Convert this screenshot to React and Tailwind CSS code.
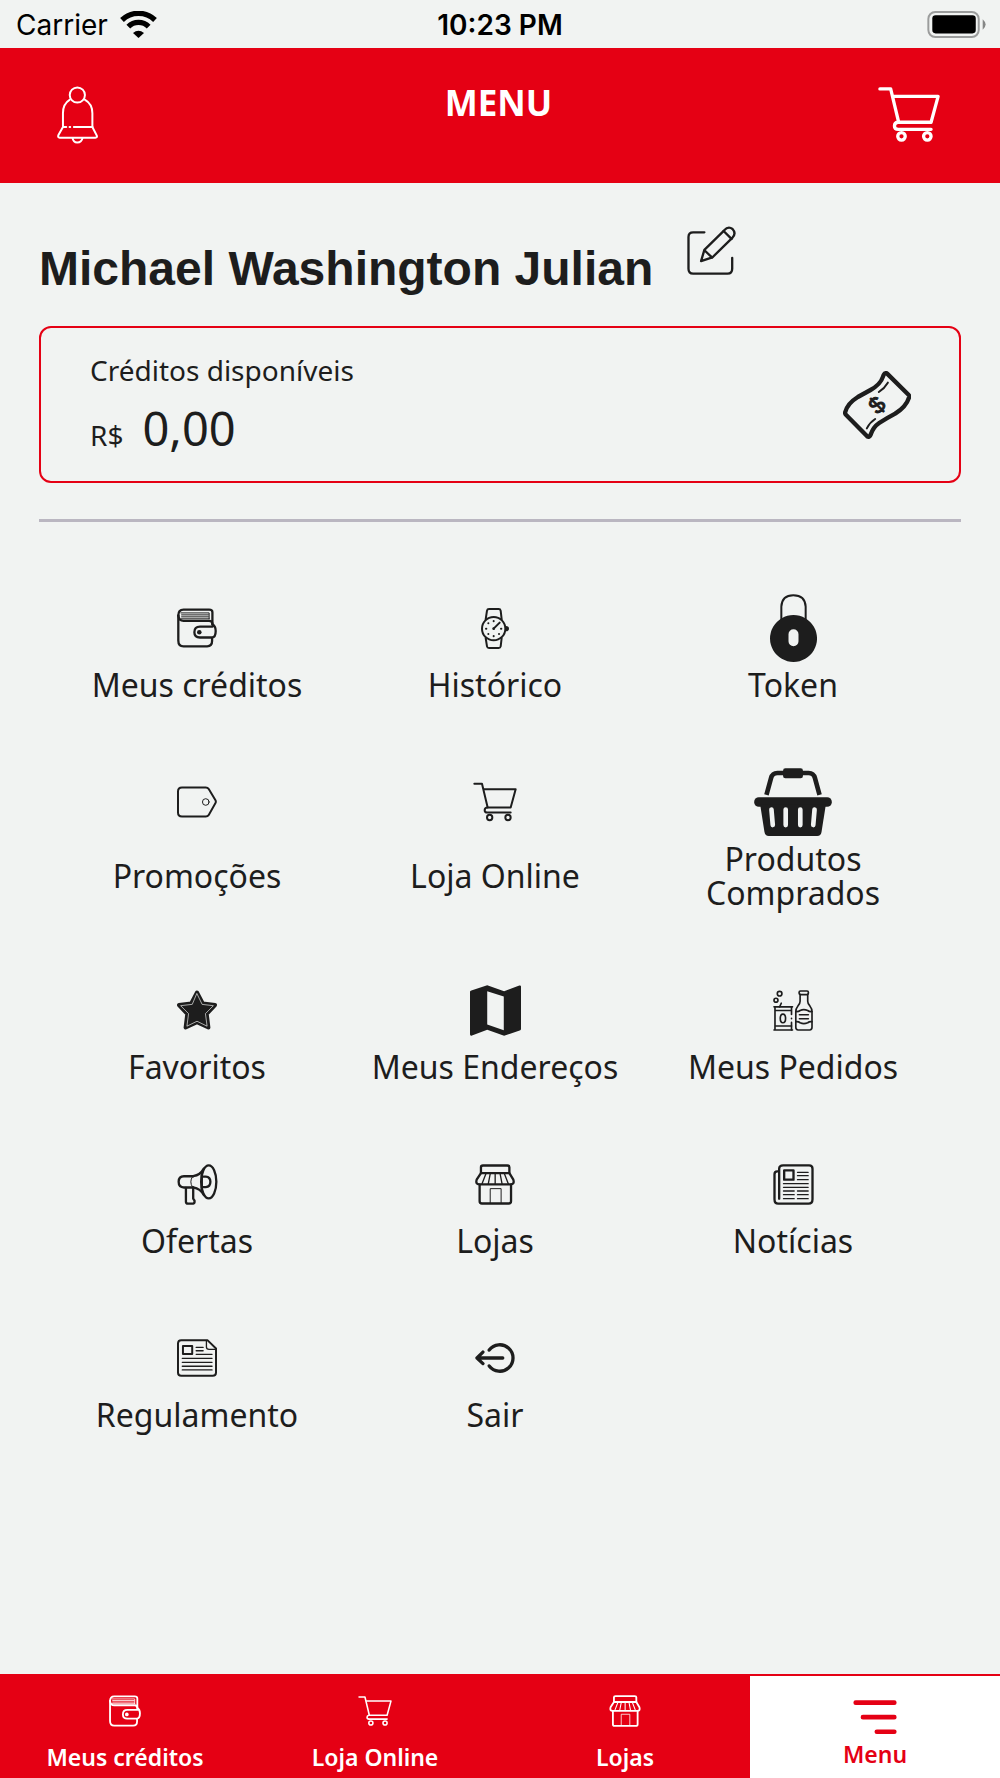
import clsx from 'clsx';

const line = {
  fill: 'none',
  stroke: 'currentColor',
  strokeLinecap: 'round',
  strokeLinejoin: 'round',
};

function WifiIcon({ className }) {
  return (
    <svg viewBox="0 0 109 81" className={className} fill="none" stroke="currentColor" aria-hidden="true">
      <path d="M5 27A71 71 0 0 1 104 27" strokeWidth="16" />
      <path d="M24 47A43 43 0 0 1 85 47" strokeWidth="16" />
      <path d="M38 66Q54 52 71 66L54.5 81Z" fill="currentColor" stroke="none" />
    </svg>
  );
}

function BatteryIcon({ className }) {
  return (
    <svg viewBox="0 0 177 82" className={className} aria-hidden="true">
      <rect x="3" y="3" width="153" height="76" rx="21" fill="none" stroke="#9b9c9c" strokeWidth="6" />
      <rect x="15" y="13" width="132" height="55" rx="10" fill="#000" />
      <path d="M168 25Q177 33 177 41Q177 49 168 57Z" fill="#858686" />
    </svg>
  );
}

function BellIcon({ className }) {
  return (
    <svg viewBox="0 0 124 175" className={className} {...line} strokeWidth="6" aria-hidden="true">
      <circle cx="61.5" cy="27" r="23" />
      <path d="M39 41Q18 54 18 82V123M84 41Q107 54 107 82V123" />
      <path d="M18 124H28M38 124H40M51 124H107" />
      <path d="M18 124L4 149Q2 156 8 156H116Q123 156 120 149L107 124" />
      <path d="M47 157Q49 171 61 171Q75 171 77 157" />
    </svg>
  );
}

function CartIcon({ className, weight = 6 }) {
  return (
    <svg viewBox="0 0 132 117" className={className} {...line} strokeWidth={weight} aria-hidden="true">
      <path d="M4 4H27L44 75" />
      <path d="M33 20H128L113 75H42Q35 76 35 83Q35 90 43 90H113" />
      <circle cx="50" cy="105" r="8" />
      <circle cx="105" cy="105" r="8" />
    </svg>
  );
}

function EditIcon({ className }) {
  return (
    <svg viewBox="0 0 147 148" className={className} {...line} strokeWidth="7" aria-hidden="true">
      <path d="M52 19H18Q4 19 4 33V129Q4 144 18 144H122Q136 144 136 129V96" />
      <path d="M42 106L52 72L112 13Q124 -1 137 9Q149 22 137 35L76 95Z" />
      <path d="M110 15L134 39M53 74L75 95" />
    </svg>
  );
}

function MoneyIcon({ className }) {
  return (
    <svg viewBox="0 0 203 204" className={className} {...line} strokeWidth="13" aria-hidden="true">
      <path d="M127 6Q122 8 119 18Q112 40 82 57L44 78Q12 98 6 124Q5 128 9 132L72 196Q78 200 82 192Q90 168 108 156Q130 142 156 128Q190 106 198 78Q199 74 196 71L132 8Q129 5 127 6Z" />
      <path d="M134 35Q124 52 107 63M96 144Q80 154 71 172" strokeWidth="6" />
      <text
        x="101"
        y="126"
        transform="rotate(-45 101 102)"
        textAnchor="middle"
        fontSize="70"
        fill="currentColor"
        strokeWidth="3"
        className="font-['Liberation_Sans']"
      >
        $
      </text>
    </svg>
  );
}

function WalletIcon({ className }) {
  return (
    <svg viewBox="0 0 122 120" className={className} {...line} strokeWidth="7" aria-hidden="true">
      <path d="M4 22Q4 4 20 4H98Q108 4 108 12V48" />
      <path d="M4 22V98Q4 116 20 116H92Q107 116 107 100V91" />
      <path d="M4 22Q6 38 20 38H98Q108 38 108 48" />
      <path d="M12 14H98V32M14 20H96M14 26H96M12 32H98" strokeWidth="3" />
      <path d="M108 56H70Q53 56 53 73Q53 89 70 89H107Q118 88 118 69Q118 54 108 49" />
      <circle cx="68" cy="73" r="7" fill="currentColor" stroke="none" />
    </svg>
  );
}

function WatchIcon({ className }) {
  return (
    <svg viewBox="0 0 84 123" className={className} {...line} strokeWidth="6" aria-hidden="true">
      <circle cx="38" cy="62" r="35" />
      <path d="M14 34L18 8Q19 3 24 3H53Q58 3 59 8L62 34" />
      <path d="M14 90L18 115Q19 120 24 120H53Q58 120 59 115L62 90" />
      <path d="M38 62L56 44" />
      <circle cx="38" cy="62" r="4" fill="currentColor" stroke="none" />
      <path d="M75 54Q84 55 84 62Q84 69 75 70Z" fill="currentColor" stroke="none" />
      <path d="M38 39V40M38 84V85M15 62H16M60 62H61M22 46H22.1M22 78H22.1M54 78H54.1" strokeWidth="6" />
    </svg>
  );
}

function PadlockIcon({ className }) {
  return (
    <svg viewBox="0 0 141 204" className={className} aria-hidden="true">
      <path d="M34 80V38Q36 4 70 4Q105 4 107 38V80" fill="none" stroke="currentColor" strokeWidth="6" />
      <path
        d="M70.5 63a70.5 70.5 0 1 0 .1 0ZM70.5 106a15 15 0 0 1 15 15v21a15 15 0 0 1-30 0v-21a15 15 0 0 1 15-15Z"
        fill="currentColor"
        fillRule="evenodd"
      />
    </svg>
  );
}

function TagIcon({ className }) {
  return (
    <svg viewBox="0 0 121 94" className={className} {...line} strokeWidth="6" aria-hidden="true">
      <path d="M15 3H87Q93 3 96 8L116 41Q119 46 116 51L96 86Q93 91 87 91H15Q3 91 3 79V15Q3 3 15 3Z" />
      <circle cx="87" cy="47" r="10" strokeWidth="3" />
    </svg>
  );
}

function BasketIcon({ className }) {
  return (
    <svg viewBox="0 0 234 205" className={className} aria-hidden="true">
      <path d="M37 81L51 30Q55 15 70 15H164Q179 15 183 30L197 81" fill="none" stroke="currentColor" strokeWidth="14" />
      <rect x="87" y="1" width="60" height="30" rx="7" fill="currentColor" />
      <rect x="0" y="88" width="234" height="29" rx="14" fill="currentColor" />
      <path d="M18 110L31 193Q33 205 44 205H190Q201 205 203 193L216 110Z" fill="currentColor" />
      <path
        d="M52 125L56 172M95 125V172M139 125V172M182 125L178 172"
        stroke="#f1f3f2"
        strokeWidth="14"
        strokeLinecap="round"
      />
    </svg>
  );
}

function StarIcon({ className }) {
  return (
    <svg viewBox="0 0 121 118" className={className} {...line} aria-hidden="true">
      <path
        d="M60.5 6L78 39L115 44L90 71L95 112L60.5 96L26 112L31 71L6 44L43 39Z"
        fill="currentColor"
        strokeWidth="12"
      />
      <path
        d="M60.5 10L76 42L110 46L86 70L91 108L60.5 93L30 108L35 70L11 46L45 42Z"
        stroke="#f1f3f2"
        strokeWidth="2"
      />
    </svg>
  );
}

function MapIcon({ className }) {
  return (
    <svg viewBox="0 0 154 153" className={className} aria-hidden="true">
      <path
        d="M0 20Q0 17 4 16L52 0L103 18L149 1Q154 0 154 4V132Q154 135 150 137L103 153L52 135L6 152Q0 154 0 148ZM52 18V119L102 136V34Z"
        fill="currentColor"
        fillRule="evenodd"
      />
    </svg>
  );
}

function DrinksIcon({ className }) {
  return (
    <svg viewBox="0 0 121 124" className={className} {...line} strokeWidth="5" aria-hidden="true">
      <circle cx="20" cy="11" r="7" />
      <circle cx="9" cy="31" r="6" />
      <path d="M25 40L20 51" />
      <path d="M3 51H59M3 121H59M6 51V121M6 62H54M6 109H56" />
      <path d="M56 51V74M56 86V87M56 98V121" />
      <ellipse cx="30" cy="86" rx="8" ry="13" />
      <rect x="79" y="3" width="28" height="11" rx="4" />
      <path d="M82 13V34Q82 42 75 49Q69 56 69 66V113Q69 121 76 121H111Q118 121 118 113V66Q118 56 112 49Q105 42 105 34V13" />
      <path d="M69 65Q77 66 82 62Q93 57 105 62Q110 66 118 65M69 96Q77 95 82 99Q93 104 105 99Q110 95 118 96M80 75H107M80 87H107" />
    </svg>
  );
}

function MegaphoneIcon({ className }) {
  return (
    <svg viewBox="0 0 122 124" className={className} {...line} strokeWidth="7" aria-hidden="true">
      <ellipse cx="95" cy="54" rx="23" ry="50" />
      <path d="M48 37H20Q4 37 4 54Q4 71 20 71H48" />
      <path d="M48 37Q70 33 80 14M48 71Q70 75 80 94" />
      <path d="M46 38Q35 54 46 70" strokeWidth="3" />
      <path d="M74 28V82M74 38H86Q100 39 100 54Q100 69 86 70H74" />
      <path d="M26 72V114Q26 120 32 120H48Q53 119 52 111L48 105V72" />
    </svg>
  );
}

function StoreIcon({ className }) {
  return (
    <svg viewBox="0 0 121 123" className={className} {...line} strokeWidth="7" aria-hidden="true">
      <path d="M18 27V9Q18 4 24 4H98Q104 4 104 9V27Z" />
      <path d="M18 27L5 47Q1 61 13 61H108Q120 61 116 47L104 27" />
      <path d="M33 29L21 60M46 29L40 60M61 29V60M76 29L82 60M89 29L101 60" strokeWidth="4" />
      <path d="M14 62V112Q14 119 21 119H102Q109 119 109 112V62" />
      <path d="M46 117V74H79V117" strokeWidth="3" />
    </svg>
  );
}

function NewspaperIcon({ className }) {
  return (
    <svg viewBox="0 0 122 123" className={className} {...line} strokeWidth="7" aria-hidden="true">
      <path d="M18 104V14Q18 4 30 4H108Q118 4 118 14V106Q118 119 106 119H15Q4 119 4 106V31Q4 22 12 22H17" />
      <path d="M33 19H61V47H33Z" />
      <path
        d="M73 25H105M73 35H105M73 47H105M31 59H105M31 70H105M31 81H63M73 81H105M31 92H63M73 92H105M31 104H63M73 104H105"
        strokeWidth="4"
      />
    </svg>
  );
}

function DocumentIcon({ className }) {
  return (
    <svg viewBox="0 0 121 114" className={className} {...line} strokeWidth="6" aria-hidden="true">
      <path d="M13 3H92L118 28V101Q118 111 108 111H13Q3 111 3 101V13Q3 3 13 3Z" />
      <path d="M18 21H46V45H18Z" />
      <path d="M89 5V24Q89 31 97 31H116" strokeWidth="4" />
      <path d="M58 25H79M58 35H79M58 46H106M16 58H106M16 70H106M16 82H106M16 93H106" strokeWidth="4" />
    </svg>
  );
}

function ExitIcon({ className }) {
  return (
    <svg viewBox="0 0 121 90" className={className} {...line} strokeWidth="10" aria-hidden="true">
      <path d="M43 21A40 40 0 1 1 43 69" />
      <path d="M6 45H84M24 27L6 45L24 62" />
    </svg>
  );
}

function MenuIcon({ className }) {
  return (
    <svg viewBox="0 0 131 103" className={className} {...line} strokeWidth="14" aria-hidden="true">
      <path d="M7 8H124M29 52H124M71 96H124" />
    </svg>
  );
}

const MENU_ITEMS = [
  { label: 'Meus créditos', Icon: WalletIcon, size: 'w-10 h-10' },
  { label: 'Histórico', Icon: WatchIcon, size: 'w-7 h-[41px]' },
  { label: 'Token', Icon: PadlockIcon, size: 'w-[47px] h-[68px]' },
  { label: 'Promoções', Icon: TagIcon, size: 'w-10 h-8' },
  { label: 'Loja Online', Icon: CartIcon, size: 'w-11 h-10' },
  { label: 'Produtos Comprados', Icon: BasketIcon, size: 'w-[78px] h-[68px]' },
  { label: 'Favoritos', Icon: StarIcon, size: 'w-10 h-10' },
  { label: 'Meus Endereços', Icon: MapIcon, size: 'w-[51px] h-[51px]' },
  { label: 'Meus Pedidos', Icon: DrinksIcon, size: 'w-10 h-[41px]' },
  { label: 'Ofertas', Icon: MegaphoneIcon, size: 'w-[41px] h-[41px]' },
  { label: 'Lojas', Icon: StoreIcon, size: 'w-10 h-[41px]' },
  { label: 'Notícias', Icon: NewspaperIcon, size: 'w-[41px] h-[41px]' },
  { label: 'Regulamento', Icon: DocumentIcon, size: 'w-10 h-[38px]' },
  { label: 'Sair', Icon: ExitIcon, size: 'w-10 h-[30px]' },
];

const TABS = [
  { label: 'Meus créditos', Icon: WalletIcon, size: 'w-8 h-8' },
  { label: 'Loja Online', Icon: CartIcon, size: 'w-[34px] h-8' },
  { label: 'Lojas', Icon: StoreIcon, size: 'w-8 h-8' },
  { label: 'Menu', Icon: MenuIcon, size: 'w-11 h-[34px]', active: true },
];

function StatusBar() {
  return (
    <div className="grid grid-cols-3 items-center h-12 px-[14px] text-black text-[28px] leading-8 font-['Inter',sans-serif]">
      <div className="flex items-center gap-3 pl-[2px]">
        <span className="pt-[2px]">Carrier</span>
        <WifiIcon className="w-[37px] h-[27px]" />
      </div>
      <span className="pt-[2px] text-center font-semibold">10:23 PM</span>
      <BatteryIcon className="w-[59px] h-[27px] justify-self-end" />
    </div>
  );
}

function Header() {
  return (
    <header className="grid grid-cols-3 items-center h-[135px] pl-[57px] pr-[60px] pb-[2px] bg-[#e50014] text-white">
      <button type="button" aria-label="Notificações" className="justify-self-start">
        <BellIcon className="w-[41px] h-[58px]" />
      </button>
      <h1 className="self-start pt-[35px] text-center text-[35px] leading-10 font-bold">MENU</h1>
      <button type="button" aria-label="Carrinho" className="justify-self-end">
        <CartIcon className="w-[62px] h-[55px]" weight={7} />
      </button>
    </header>
  );
}

function CreditCard() {
  return (
    <section className="mt-[29px] flex items-center justify-between px-12 pt-6 pb-[23px] border-2 border-[#e50014] rounded-xl">
      <div className="pl-[1px]">
        <p className="text-[28px] leading-9">Créditos disponíveis</p>
        <p className="mt-[10px] flex items-baseline gap-[19px]">
          <span className="text-[28px] leading-9">R$</span>
          <span className="text-[47px] leading-[60px]">0,00</span>
        </p>
      </div>
      <MoneyIcon className="w-[68px] h-[68px]" />
    </section>
  );
}

function TabBar() {
  return (
    <nav className="mt-auto grid grid-cols-4 border-t-2 border-[#e50014] bg-[#e50014]">
      {TABS.map(({ label, Icon, size, active }) => (
        <a
          key={label}
          href="#"
          aria-current={active ? 'page' : undefined}
          className={clsx(
            'flex flex-col items-center text-[23px] leading-7 font-semibold',
            active ? 'gap-[6px] pt-6 pb-[10px] bg-white text-[#e50014]' : 'gap-4 pt-[19px] pb-[7px] text-white'
          )}
        >
          <Icon className={size} />
          {label}
        </a>
      ))}
    </nav>
  );
}

export default function App() {
  return (
    <div className="min-h-screen flex flex-col bg-[#f1f3f2] text-[#1d1d1d] font-['Noto_Sans',sans-serif]">
      <StatusBar />
      <Header />
      <main className="px-[39px] pt-[43px] pb-12">
        <div className="flex items-start gap-[34px]">
          <h2 className="mt-[15px] text-5xl leading-[56px] font-bold font-['Liberation_Sans',sans-serif]">
            Michael Washington Julian
          </h2>
          <button type="button" aria-label="Editar perfil">
            <EditIcon className="w-[49px] h-[49px]" />
          </button>
        </div>

        <CreditCard />

        <hr className="mt-9 border-t-3 border-[#bab6c1]" />

        <div className="mt-[72px] pl-[9px] pr-[19px] grid grid-cols-3 gap-y-[66px]">
          {MENU_ITEMS.map(({ label, Icon, size }) => (
            <a key={label} href="#" className="flex flex-col items-center gap-[6px] px-4">
              <span className="flex items-center justify-center h-[68px]">
                <Icon className={size} />
              </span>
              <span className="flex-1 flex items-center text-center text-[32px] leading-[34px]">{label}</span>
            </a>
          ))}
        </div>
      </main>
      <TabBar />
    </div>
  );
}
